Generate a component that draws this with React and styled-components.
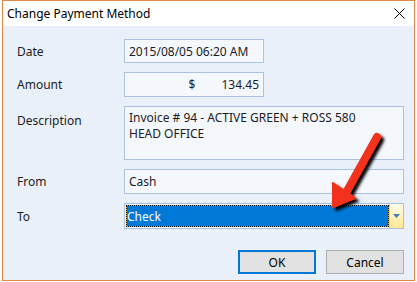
import React from 'react'
import styled, { createGlobalStyle } from 'styled-components'

const Global = createGlobalStyle`
  body {
    margin: 0;
    background: #ffffff;
    font-family: 'Noto Sans', 'Liberation Sans', sans-serif;
  }
`

const Page = styled.div`
  position: relative;
  width: 417px;
  height: 282px;
  padding-left: 2px;
  box-sizing: border-box;
`

const Window = styled.div`
  width: 413px;
  height: 281px;
  box-sizing: border-box;
  border: 1px solid #e0884a;
  display: flex;
  flex-direction: column;
  background: #e9f0f9;
`

const TitleBar = styled.div`
  height: 25px;
  flex: none;
  background: #ffffff;
  display: flex;
  align-items: center;
  justify-content: space-between;
  padding: 0 9px 0 4px;
  font-size: 12px;
  color: #000000;
`

const Body = styled.div`
  flex: none;
  padding: 13px 10px 0 14px;
  display: grid;
  grid-template-columns: 107px 1fr;
  row-gap: 9px;
  align-content: start;
`

const Label = styled.div`
  font-size: 12px;
  color: #1c1c24;
  display: flex;
  align-items: ${p => (p.top ? 'flex-start' : 'center')};
  padding-top: ${p => (p.top ? '6px' : '0')};
`

const Field = styled.div`
  box-sizing: border-box;
  width: ${p => p.w || '280px'};
  height: ${p => p.h || '25px'};
  background: #f4f7fc;
  border: 1px solid #aac2e0;
  font-size: 12px;
  color: #1c1c24;
  padding: ${p => (p.multi ? '3px 4px' : '0 4px')};
  line-height: ${p => (p.multi ? '16px' : 'normal')};
  display: ${p => (p.multi ? 'block' : 'flex')};
  align-items: center;
  justify-content: ${p => p.justify || 'flex-start'};
`

const Money = styled.span`
  margin-right: 26px;
`

const Combo = styled.div`
  box-sizing: border-box;
  width: 280px;
  height: 26px;
  border: 1px solid #aac2e0;
  background: #f4f7fc;
  display: flex;
  padding: 1px 0 1px 1px;
`

const Selected = styled.div`
  flex: 1;
  background: #0078d7;
  color: #ffffff;
  font-size: 12px;
  display: flex;
  align-items: center;
  padding-left: 1px;
  outline: 1px dotted #000000;
  outline-offset: -1px;
  box-shadow: inset 0 0 0 1px #f0a030;
`

const DropButton = styled.div`
  width: 13px;
  margin-top: -1px;
  margin-bottom: -1px;
  background: linear-gradient(#fffbea, #ffe892);
  border-left: 1px solid #e8d49a;
  display: flex;
  align-items: center;
  justify-content: center;
`

const Footer = styled.div`
  display: flex;
  justify-content: flex-end;
  gap: 10px;
  padding: 21px 10px 0 0;
`

const Button = styled.button`
  box-sizing: border-box;
  width: 78px;
  height: 24px;
  background: #e1e1e1;
  border: ${p => (p.primary ? '2px solid #0078d7' : '1px solid #adadad')};
  font-family: 'Noto Sans', 'Liberation Sans', sans-serif;
  font-size: 12px;
  color: #000000;
  padding: 0;
`

const Arrow = styled.svg`
  position: absolute;
  left: 320px;
  top: 128px;
`

export default function App() {
  return (
    <Page>
      <Global />
      <Window>
        <TitleBar>
          <span>Change Payment Method</span>
          <svg width="11" height="11" viewBox="0 0 11 11">
            <path d="M0.5 0.5 L10.5 10.5 M10.5 0.5 L0.5 10.5" stroke="#000" strokeWidth="1" />
          </svg>
        </TitleBar>
        <Body>
          <Label>Date</Label>
          <Field w="140px" h="24px">2015/08/05 06:20 AM</Field>
          <Label>Amount</Label>
          <Field w="140px" justify="flex-end">
            <Money>$</Money>
            <span>134.45</span>
          </Field>
          <Label top>Description</Label>
          <Field multi h="54px">
            Invoice # 94 - ACTIVE GREEN + ROSS 580
            <br />
            HEAD OFFICE
          </Field>
          <Label>From</Label>
          <Field>Cash</Field>
          <Label>To</Label>
          <Combo>
            <Selected>Check</Selected>
            <DropButton>
              <svg width="7" height="4" viewBox="0 0 7 4">
                <path d="M0 0 H7 L3.5 4 Z" fill="#4a78b8" />
              </svg>
            </DropButton>
          </Combo>
        </Body>
        <Footer>
          <Button primary>OK</Button>
          <Button>Cancel</Button>
        </Footer>
      </Window>
      <Arrow width="70" height="90" viewBox="0 0 70 90">
        <defs>
          <filter id="sh" x="-30%" y="-30%" width="160%" height="160%">
            <feGaussianBlur in="SourceAlpha" stdDeviation="1.5" />
            <feOffset dx="3" dy="3" result="b" />
            <feMerge>
              <feMergeNode in="b" />
              <feMergeNode in="SourceGraphic" />
            </feMerge>
          </filter>
        </defs>
        <g filter="url(#sh)">
          <path d="M57 9 L27 63" stroke="#f2311a" strokeWidth="8" strokeLinecap="round" />
          <path d="M13 79 L13 55 L35 70 Z" fill="#f2311a" stroke="#f2311a" strokeWidth="2" strokeLinejoin="round" />
        </g>
      </Arrow>
    </Page>
  )
}
